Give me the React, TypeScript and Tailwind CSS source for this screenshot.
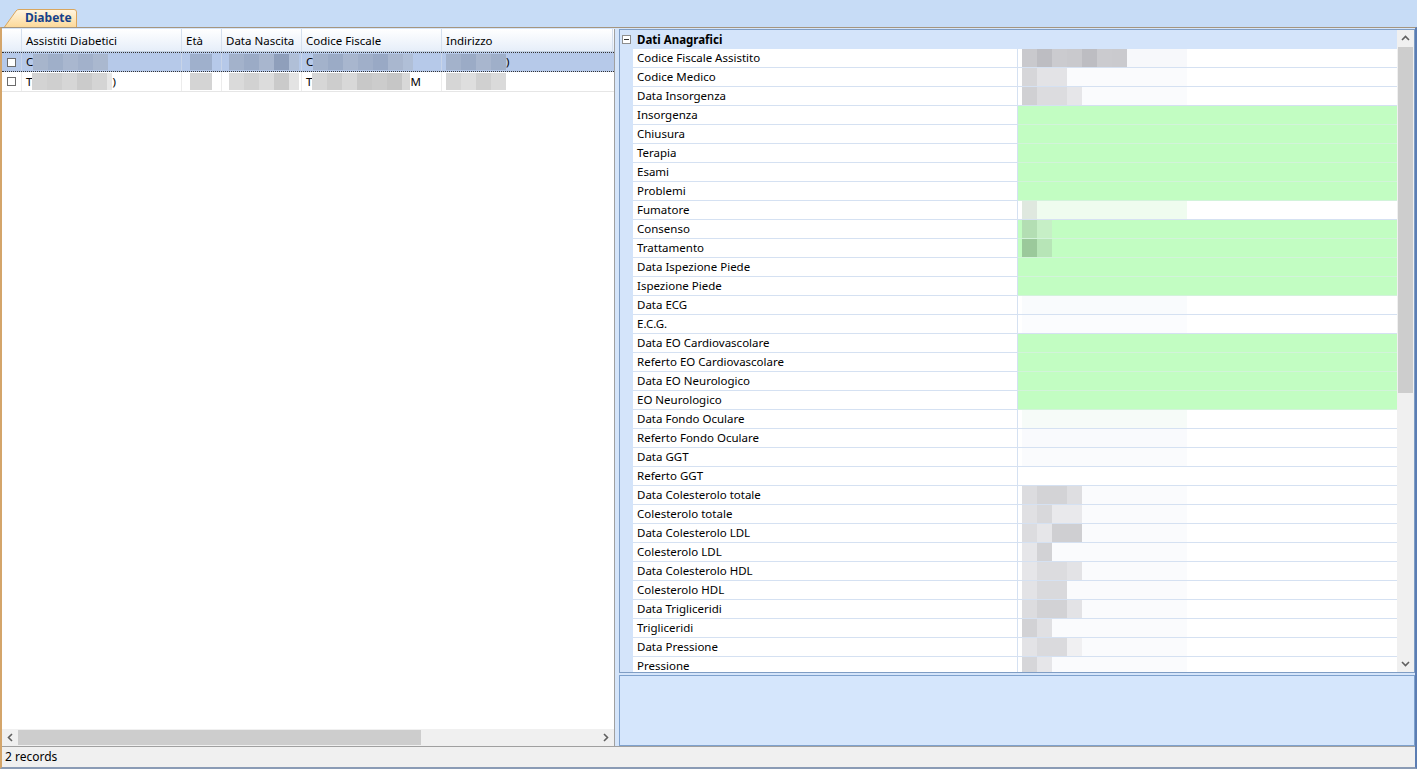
const FONT = { fontFamily: '"Noto Sans", "Segoe UI", Arial, sans-serif' };

type Blk = [number, string];

const Blur = ({ blocks, h = 15 }: { blocks: Blk[]; h?: number }) => (
  <div className="flex shrink-0">
    {blocks.map(([w, c], i) => (
      <div key={i} style={{ width: w, height: h, background: c }} />
    ))}
  </div>
);

type Row = { label: string; green?: boolean; blur?: Blk[] };

const rows: Row[] = [
  { label: 'Codice Fiscale Assistito', blur: [[15, '#c9c9cd'], [15, '#bdbdc2'], [15, '#cbcbcf'], [15, '#c9c9cd'], [15, '#bdbdc2'], [15, '#cbcbcf'], [15, '#cacace'], [60, '#f7f8fb']] },
  { label: 'Codice Medico', blur: [[15, '#d6d6d9'], [30, '#e3e3e6'], [120, '#fafbfd']] },
  { label: 'Data Insorgenza', blur: [[15, '#d0d0d3'], [30, '#dcdcdf'], [15, '#e6e6e9'], [105, '#fafbfd']] },
  { label: 'Insorgenza', green: true },
  { label: 'Chiusura', green: true },
  { label: 'Terapia', green: true },
  { label: 'Esami', green: true },
  { label: 'Problemi', green: true },
  { label: 'Fumatore', blur: [[15, '#dfe8df'], [150, '#effcef']] },
  { label: 'Consenso', green: true, blur: [[15, '#b3deb3'], [15, '#c6efc6']] },
  { label: 'Trattamento', green: true, blur: [[15, '#9bc99b'], [15, '#b7e5b7']] },
  { label: 'Data Ispezione Piede', green: true },
  { label: 'Ispezione Piede', green: true },
  { label: 'Data ECG', blur: [[165, '#f9fbfd']] },
  { label: 'E.C.G.', blur: [[165, '#fbfcfe']] },
  { label: 'Data EO Cardiovascolare', green: true },
  { label: 'Referto EO Cardiovascolare', green: true },
  { label: 'Data EO Neurologico', green: true },
  { label: 'EO Neurologico', green: true },
  { label: 'Data Fondo Oculare', blur: [[165, '#f6fbf8']] },
  { label: 'Referto Fondo Oculare', blur: [[165, '#f9fafd']] },
  { label: 'Data GGT', blur: [[165, '#fafbfd']] },
  { label: 'Referto GGT' },
  { label: 'Data Colesterolo totale', blur: [[15, '#dcdcdf'], [30, '#d3d3d6'], [15, '#dedee1'], [105, '#fafbfd']] },
  { label: 'Colesterolo totale', blur: [[15, '#e0e0e3'], [15, '#d8d8db'], [30, '#e9e9ec'], [105, '#fafbfd']] },
  { label: 'Data Colesterolo LDL', blur: [[15, '#dcdcdf'], [15, '#e6e6e9'], [30, '#cfcfd2'], [105, '#fafbfd']] },
  { label: 'Colesterolo LDL', blur: [[15, '#e6e6e9'], [15, '#d2d2d5'], [135, '#fafbfd']] },
  { label: 'Data Colesterolo HDL', blur: [[15, '#e6e6e9'], [30, '#dcdcdf'], [15, '#e3e3e6'], [105, '#fafbfd']] },
  { label: 'Colesterolo HDL', blur: [[15, '#e3e3e6'], [30, '#d9d9dc'], [120, '#fafbfd']] },
  { label: 'Data Trigliceridi', blur: [[15, '#dcdcdf'], [30, '#d2d2d5'], [15, '#e3e3e6'], [105, '#fafbfd']] },
  { label: 'Trigliceridi', blur: [[15, '#d2d2d5'], [15, '#e0e0e3'], [135, '#fafbfd']] },
  { label: 'Data Pressione', blur: [[15, '#e3e3e6'], [30, '#dadadd'], [15, '#f0f0f2'], [105, '#fafbfd']] },
  { label: 'Pressione', blur: [[15, '#d6d6d9'], [15, '#e6e6e9'], [135, '#fafbfd']] },
];

const Chevron = ({ dir }: { dir: 'up' | 'down' | 'left' | 'right' }) => {
  const d = {
    up: 'M1 6 L4.5 2.5 L8 6',
    down: 'M1 3 L4.5 6.5 L8 3',
    left: 'M6 1 L2.5 4.5 L6 8',
    right: 'M3 1 L6.5 4.5 L3 8',
  }[dir];
  return (
    <svg width="9" height="9" viewBox="0 0 9 9">
      <path d={d} fill="none" stroke="#606060" strokeWidth="1.6" />
    </svg>
  );
};

const Check = () => <div className="w-[9px] h-[9px] border border-[#6b6b6b] bg-white" />;

const cols = [
  { t: 'Assistiti Diabetici', w: 160 },
  { t: 'Età', w: 40 },
  { t: 'Data Nascita', w: 80 },
  { t: 'Codice Fiscale', w: 140 },
  { t: 'Indirizzo', w: 171 },
];

const LeftGrid = () => (
  <div className="w-[613px] flex flex-col bg-white border-r border-[#a0a0a0]">
    <div className="flex h-[23px] border-b border-[#c5d2e3] bg-gradient-to-b from-white to-[#e6eef9] text-black">
      <div className="w-[20px] border-r border-[#d5dfed]" />
      {cols.map((c) => (
        <div key={c.t} style={{ width: c.w }} className="px-[4px] pt-[2px] flex items-center whitespace-nowrap overflow-hidden border-r border-[#d5dfed]">
          {c.t}
        </div>
      ))}
    </div>
    <div className="flex h-[20px] bg-[#b6c9e9] border-y border-dotted border-[#333]">
      <div className="w-[20px] flex items-center justify-center border-r border-[#c8d4e8]"><Check /></div>
      <div className="w-[160px] flex items-center pl-[4px] border-r border-[#c8d4e8]">C<Blur h={16} blocks={[[15, '#a7b5cc'], [15, '#9fafc9'], [15, '#a9b7cf'], [15, '#a2b1cb'], [15, '#aab8cf']]} /></div>
      <div className="w-[40px] flex items-center pl-[8px] border-r border-[#c8d4e8]"><Blur h={16} blocks={[[22, '#9fb0cc']]} /></div>
      <div className="w-[80px] flex items-center pl-[7px] border-r border-[#c8d4e8]"><Blur h={16} blocks={[[15, '#a3b2cb'], [15, '#9babc6'], [15, '#a8b6ce'], [15, '#8f9fbb'], [10, '#b0bfd7']]} /></div>
      <div className="w-[140px] flex items-center pl-[4px] border-r border-[#c8d4e8]">C<Blur h={16} blocks={[[15, '#a3b2cb'], [15, '#9babc6'], [15, '#a8b6ce'], [15, '#a0afc9'], [15, '#99a9c5'], [15, '#a9b7cf'], [10, '#b0bfd7']]} /></div>
      <div className="w-[171px] flex items-center pl-[4px]"><Blur h={16} blocks={[[15, '#a3b2cb'], [15, '#9babc6'], [15, '#a8b6ce'], [15, '#9fafc9']]} /><span>)</span></div>
    </div>
    <div className="flex h-[20px] border-b border-[#e6e6e6]">
      <div className="w-[20px] flex items-center justify-center border-r border-[#ececec]"><Check /></div>
      <div className="w-[160px] flex items-center pl-[4px] border-r border-[#ececec]">T<Blur h={17} blocks={[[15, '#d3d3d3'], [15, '#cfcfcf'], [15, '#d6d6d6'], [15, '#cbcbcb'], [15, '#d4d4d4'], [5, '#e6e6e6']]} /><span>)</span></div>
      <div className="w-[40px] flex items-center pl-[8px] border-r border-[#ececec]"><Blur h={17} blocks={[[22, '#d4d4d4']]} /></div>
      <div className="w-[80px] flex items-center pl-[7px] border-r border-[#ececec]"><Blur h={17} blocks={[[15, '#dadada'], [15, '#d2d2d2'], [15, '#dcdcdc'], [15, '#cacaca'], [10, '#e3e3e3']]} /></div>
      <div className="w-[140px] flex items-center pl-[4px] border-r border-[#ececec]">T<Blur h={17} blocks={[[15, '#d6d6d6'], [15, '#cdcdcd'], [15, '#d8d8d8'], [15, '#c8c8c8'], [15, '#cccccc'], [15, '#c6c6c6'], [8, '#d8d8d8']]} /><span>M</span></div>
      <div className="w-[171px] flex items-center pl-[4px]"><Blur h={17} blocks={[[15, '#d6d6d6'], [15, '#dedede'], [15, '#d0d0d0'], [15, '#dadada']]} /></div>
    </div>
    <div className="flex-1" />
    <div className="h-[17px] flex items-center bg-[#f0f0f0]">
      <div className="w-[16px] flex justify-center"><Chevron dir="left" /></div>
      <div className="w-[403px] h-[15px] bg-[#cdcdcd]" />
      <div className="flex-1" />
      <div className="w-[17px] flex justify-center"><Chevron dir="right" /></div>
    </div>
  </div>
);

const PropGrid = () => (
  <div className="flex-1 flex flex-col min-w-0">
    <div className="h-[645px] flex border border-[#7f9dc4] bg-white overflow-hidden">
      <div className="flex-1 flex flex-col min-w-0 overflow-hidden">
        <div className="h-[19px] shrink-0 flex items-center bg-[#d4e4fa] font-bold text-black">
          <div className="w-[13px] flex justify-center">
            <div className="w-[9px] h-[9px] border border-[#8e8e8e] bg-white flex items-center justify-center">
              <div className="w-[5px] h-px bg-[#333]" />
            </div>
          </div>
          <div className="pl-[4px]">Dati Anagrafici</div>
        </div>
        {rows.map((r) => (
          <div key={r.label} className="h-[19px] shrink-0 flex text-black">
            <div className="w-[13px] bg-[#d4e4fa]" />
            <div className="w-[385px] pl-[4px] flex items-center whitespace-nowrap bg-white border-b border-[#d5e1f2] border-r">
              {r.label}
            </div>
            <div
              className={`flex-1 flex items-center pl-[4px] border-b ${r.green ? 'bg-[#c2fdc2] border-[#d2f3da]' : 'bg-white border-[#d5e1f2]'}`}
            >
              {r.blur && <Blur blocks={r.blur} h={18} />}
            </div>
          </div>
        ))}
      </div>
      <div className="w-[17px] shrink-0 flex flex-col items-center bg-[#f0f0f0]">
        <div className="h-[17px] flex items-center"><Chevron dir="up" /></div>
        <div className="w-[15px] h-[346px] bg-[#cdcdcd]" />
        <div className="flex-1" />
        <div className="h-[17px] flex items-center"><Chevron dir="down" /></div>
      </div>
    </div>
    <div className="h-[71px] mt-[2px] border border-[#7ea1cd] bg-[#d5e6fc]" />
  </div>
);

export default function App() {
  return (
    <div className="w-[1417px] h-[769px] flex flex-col bg-[#c7dcf6] overflow-hidden text-[11.5px]" style={FONT}>
      <div className="h-[27px] flex items-end pl-[4px]">
        <div className="relative h-[18px] w-[73px] flex items-end">
          <svg className="absolute inset-0" width="73" height="18" viewBox="0 0 73 18">
            <defs>
              <linearGradient id="tg" x1="0" y1="0" x2="0" y2="1">
                <stop offset="0" stopColor="#fff6e2" />
                <stop offset="1" stopColor="#fcd99a" />
              </linearGradient>
            </defs>
            <path d="M0.5 18 L12 2 Q13 0.5 15 0.5 L70 0.5 Q72.5 0.5 72.5 3 L72.5 18" fill="url(#tg)" stroke="#d9a65e" />
          </svg>
          <div className="relative w-full h-full flex items-center pl-[21px] text-[12px] font-bold text-[#15428b]">Diabete</div>
        </div>
      </div>
      <div className="flex-1 flex flex-col border-t border-[#a5957e] border-l-2 border-l-[#d4a56a] border-r-2 border-r-[#5b7db3] border-b-2 border-b-[#8a9bb5] bg-[#f0f0f0]">
        <div className="h-[718px] flex pt-[1px] bg-[#d5e5fa]">
          <LeftGrid />
          <div className="w-[4px]" />
          <PropGrid />
        </div>
        <div className="flex-1 flex items-center pl-[3px] border-t border-[#a0a0a0] text-[12px] text-black bg-[#f0f0f0]">
          2 records
        </div>
      </div>
    </div>
  );
}
